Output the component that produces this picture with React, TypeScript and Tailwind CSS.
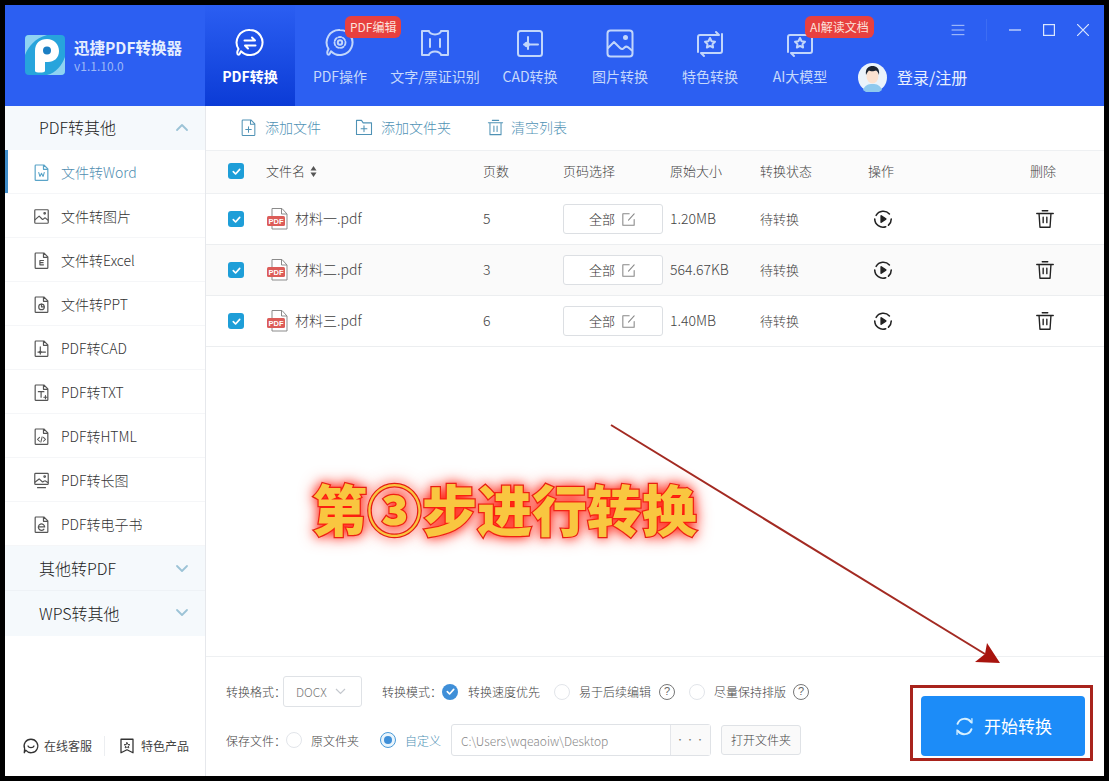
import React from "react";

const font = "font-['Noto_Sans_CJK_SC','Liberation_Sans',sans-serif]";

function Svg({ s = 20, c = "currentColor", w = 1.5, children }: { s?: number; c?: string; w?: number; children: React.ReactNode }) {
  return (
    <svg width={s} height={s} viewBox="0 0 24 24" fill="none" stroke={c} strokeWidth={w} strokeLinecap="round" strokeLinejoin="round" className="shrink-0">
      {children}
    </svg>
  );
}

const FILE = "M5 2.5h10l5 5V21a1 1 0 0 1-1 1H5a1 1 0 0 1-1-1V3.5a1 1 0 0 1 1-1zM14.5 2.5V8H20";

function NavIcon({ k }: { k: string }) {
  const c = "#c2d6fb";
  if (k === "conv")
    return (
      <svg width="32" height="32" viewBox="0 0 32 32" fill="none" stroke="#fff" strokeWidth="2" strokeLinecap="round" strokeLinejoin="round">
        <path d="M16 3a12.500 12.500 0 1 1-9 21.200c-1 1.500-1 3.500-2.500 3.500S2.700 25 4.500 22A12.500 12.500 0 0 1 16 3z" />
        <path d="M10.500 13.500H21l-3-3M21.500 18.500H11l3 3" />
      </svg>
    );
  if (k === "op")
    return (
      <svg width="32" height="32" viewBox="0 0 32 32" fill="none" stroke={c} strokeWidth="2" strokeLinecap="round" strokeLinejoin="round">
        <path d="M16 3a12.500 12.500 0 1 1-9 21.200c-1 1.500-1 3.500-2.500 3.500S2.700 25 4.500 22A12.500 12.500 0 0 1 16 3z" />
        <circle cx="16" cy="15.500" r="2.200" />
        <circle cx="16" cy="15.500" r="5.500" strokeDasharray="3 1.700" strokeWidth="1.800" />
      </svg>
    );
  if (k === "ocr")
    return (
      <svg width="32" height="32" viewBox="0 0 32 32" fill="none" stroke={c} strokeWidth="2" strokeLinecap="round" strokeLinejoin="round">
        <path d="M3 4h7a6 3.500 0 0 0 12 0h7v24h-7a6 3.500 0 0 0-12 0H3z" />
        <path d="M11 12v8M21 12v8" />
      </svg>
    );
  if (k === "cad")
    return (
      <svg width="30" height="30" viewBox="0 0 30 30" fill="none" stroke={c} strokeWidth="2" strokeLinecap="round" strokeLinejoin="round">
        <rect x="3" y="3" width="24" height="25" rx="2.500" />
        <path d="M13 9v12M9 16.500h14" />
        <circle cx="12" cy="16.500" r="1.800" fill={c} />
      </svg>
    );
  if (k === "img")
    return (
      <svg width="30" height="30" viewBox="0 0 30 30" fill="none" stroke={c} strokeWidth="2" strokeLinecap="round" strokeLinejoin="round">
        <rect x="2.500" y="2.500" width="25" height="26" rx="3" />
        <path d="M3 20l6-6 6 6c2 2 3 1 4.500-.5 1.500-1.500 3-1 4.500.5l3 2.500" />
        <circle cx="20.500" cy="9.500" r="1.500" fill={c} />
      </svg>
    );
  return (
    <svg width="30" height="30" viewBox="0 0 30 30" fill="none" stroke={c} strokeWidth="2" strokeLinecap="round" strokeLinejoin="round">
      <path d="M3 24V9a2 2 0 0 1 2-2h19l-3-3M27 6v17a2 2 0 0 1-2 2H6l3 3" />
      <path d="M15 10l1.600 3.200 3.400.5-2.500 2.400.6 3.400-3.100-1.600-3.100 1.600.6-3.400-2.500-2.400 3.400-.5z" />
    </svg>
  );
}

function Nav({ icon, label, w = "w-[90px]", active, badge }: { icon: string; label: string; w?: string; active?: boolean; badge?: string }) {
  return (
    <div className={`relative flex flex-col items-center pt-[22px] ${w} ${active ? "bg-gradient-to-b from-[#2b5ef2] to-[#0b3bd6]" : ""}`}>
      <div className="h-[32px] flex items-center justify-center"><NavIcon k={icon} /></div>
      <div className={`mt-[7px] text-[14px] leading-[20px] whitespace-nowrap ${active ? "text-white font-bold" : "text-[#c6d8fb] font-normal"}`}>{label}</div>
      {badge && (
        <div className="absolute left-[50px] top-[11px] h-[22px] px-[5px] rounded-[6px] bg-[#e8403f] text-[#fbe3dc] text-[12px] font-normal leading-[22px] whitespace-nowrap">{badge}</div>
      )}
    </div>
  );
}

function SideIcon({ k, c }: { k: string; c: string }) {
  return (
    <Svg s={19} c={c} w={1.5}>
      {k === "long" ? (
        <>
          <rect x="3.500" y="3" width="17" height="14" rx="1" />
          <path d="M4 14l5-4 4 3.500c1.500 1 2.500-2 4-1l3 2M7 21h10" />
          <circle cx="16" cy="7" r="1" />
        </>
      ) : k === "img" ? (
        <>
          <rect x="3.500" y="3.500" width="17" height="17" rx="1" />
          <path d="M4 16l5-4.500 4 4c1.500 1 2.500-2.500 4-1.500l3 2.500" />
          <circle cx="16" cy="8" r="1" />
        </>
      ) : (
        <>
          <path d={FILE} />
          {k === "w" && <path d="M8.500 12l1.500 5 2-4 2 4 1.500-5" strokeWidth="1.300" />}
          {k === "e" && <path d="M14.500 12H10v5.500h4.500M10 14.700h4" strokeWidth="1.500" />}
          {k === "p" && <><circle cx="12" cy="15" r="3.500" strokeWidth="1.500" /><path d="M12 11.500V15h3.500" strokeWidth="1.500" /></>}
          {k === "c" && <><path d="M10.500 10v9M7.500 16.500H17" /><circle cx="10.500" cy="16.500" r="1" /></>}
          {k === "t" && <path d="M8 11h7M11.500 11v7M15 18h4M17 16v4" />}
          {k === "h" && <path d="M9.500 13l-2.500 2.500 2.500 2.500M14.500 13l2.500 2.500-2.500 2.500M12.800 12.500l-1.600 6.500" strokeWidth="1.300" />}
          {k === "b" && <path d="M8 15h8a4 4 0 1 0-1 3" strokeWidth="1.500" />}
        </>
      )}
    </Svg>
  );
}

function Chevron({ up }: { up?: boolean }) {
  return (
    <svg width="14" height="9" viewBox="0 0 14 9" fill="none" stroke="#9cc3d6" strokeWidth="1.800" strokeLinecap="round" strokeLinejoin="round">
      <path d={up ? "M2 7l5-5 5 5" : "M2 2l5 5 5-5"} />
    </svg>
  );
}

function SideItem({ k, label, active }: { k: string; label: string; active?: boolean }) {
  return (
    <div className={`relative h-[44px] flex items-center pl-[27px] pt-[1px] border-b border-[#f5f6f8] ${active ? "text-[#4f8db0]" : "text-[#333]"}`}>
      {active && <div className="absolute left-0 top-0 bottom-0 w-[3px] bg-[#3f8cc9]" />}
      <SideIcon k={k} c={active ? "#5aa4c8" : "#555"} />
      <span className="ml-[10px] text-[14px] whitespace-nowrap">{label}</span>
    </div>
  );
}

function SideHead({ label, light }: { label: string; light?: boolean }) {
  return (
    <div className={`h-[45px] flex items-center justify-between pl-[34px] pr-[16px] text-[16px] text-[#222] bg-[#f5f9fc] ${light ? "border-b border-[#eef2f6]" : "pb-[2px]"}`}>
      <span>{label}</span>
      <Chevron />
    </div>
  );
}

function Check({ round }: { round?: boolean }) {
  return (
    <span className={`w-[16px] h-[16px] flex items-center justify-center shrink-0 ${round ? "rounded-full bg-[#3f8fd8]" : "rounded-[3px] bg-[#1e9ed8]"}`}>
      <svg width="11" height="11" viewBox="0 0 12 12" fill="none" stroke="#fff" strokeWidth="1.800" strokeLinecap="round" strokeLinejoin="round">
        <path d="M2.500 6.200l2.500 2.500 4.500-5" />
      </svg>
    </span>
  );
}

function PdfIcon() {
  return (
    <svg width="24" height="24" viewBox="0 0 24 24" fill="none" className="shrink-0">
      <path d="M6 1.500h10l5 5.500v15H6z" fill="#fff" stroke="#8b8b8b" strokeWidth="1" />
      <path d="M15.500 1.500V7H21" stroke="#8b8b8b" strokeWidth="1" />
      <rect x="1" y="9" width="18" height="10" rx="1.500" fill="#dc5c58" />
      <text x="10" y="17" textAnchor="middle" fontSize="7.500" fontWeight="700" fill="#fff" fontFamily="Liberation Sans">PDF</text>
    </svg>
  );
}

function Radio({ on }: { on?: boolean }) {
  return (
    <span className={`w-[16px] h-[16px] rounded-full border shrink-0 flex items-center justify-center ${on ? "border-[#4a9ad8] bg-[#eaf5fc]" : "border-[#e2e5ea] bg-white"}`}>
      {on && <span className="w-[8px] h-[8px] rounded-full bg-[#3f8fd8]" />}
    </span>
  );
}

function Help() {
  return (
    <span className="w-[16px] h-[16px] rounded-full border border-[#777] text-[#666] text-[11px] leading-none flex items-center justify-center shrink-0 font-['Liberation_Sans',sans-serif]">?</span>
  );
}

const rows = [
  { n: "材料一.pdf", p: "5", s: "1.20MB" },
  { n: "材料二.pdf", p: "3", s: "564.67KB" },
  { n: "材料三.pdf", p: "6", s: "1.40MB" },
];

const cols = "grid grid-cols-[60px_217px_80px_107px_90px_108px_162px_1fr] items-center";

function Tool({ label, icon, gap = "gap-[7px]" }: { label: string; icon: React.ReactNode; gap?: string }) {
  return (
    <div className={`flex items-center ${gap} text-[14px] text-[#4f92b5] pb-[2px]`}>
      {icon}
      <span>{label}</span>
    </div>
  );
}

export default function App() {
  return (
    <div className={`relative w-[1109px] h-[781px] bg-black pl-[5px] pr-[5px] pt-[5px] pb-[5px] overflow-hidden font-light ${font}`}>
      <div className="w-full h-full bg-white flex flex-col">
        {/* header */}
        <div className="h-[101px] bg-[#2c5ff2] flex shrink-0">
          <div className="w-[200px] flex items-center pl-[20px] pb-[2px]">
            <svg width="40" height="40" viewBox="0 0 40 40">
              <rect width="40" height="40" rx="4" fill="#27a4dc" />
              <path d="M0 4a4 4 0 0 1 4-4h18C10 3 3 12 0 20z" fill="#8fd3f2" />
              <path d="M40 36a4 4 0 0 1-4 4H22c9-2 15-10 18-18z" fill="#8fd3f2" />
              <path d="M10 36V16C10 8 15 4 22 4c7 0 12 5 12 12s-5 11-11 11h-3v9c0 2-10 2-10 0z" fill="#fff" />
              <circle cx="22" cy="15.500" r="4" fill="#1b7fc4" />
            </svg>
            <div className="ml-[9px]">
              <div className="text-[15.500px] leading-[22px] font-bold text-[#e6eefe] whitespace-nowrap">迅捷PDF转换器</div>
              <div className="text-[12px] leading-[16px] font-normal text-[#9db8f7]">v1.1.10.0</div>
            </div>
          </div>
          <Nav icon="conv" label="PDF转换" active />
          <Nav icon="op" label="PDF操作" badge="PDF编辑" />
          <Nav icon="ocr" label="文字/票证识别" w="w-[100px]" />
          <Nav icon="cad" label="CAD转换" />
          <Nav icon="img" label="图片转换" />
          <Nav icon="star" label="特色转换" />
          <Nav icon="star" label="AI大模型" badge="AI解读文档" />
          <div className="flex-1 flex flex-col">
            <div className="h-[50px] flex items-center justify-end pr-[15px] pb-[1px]">
              <Svg s={16} c="#c6d8fb" w={1.300}><path d="M3 5h18M3 12h18M3 19h18" /></Svg>
              <div className="w-px h-[22px] bg-[#3d6df3] ml-[20px] mr-[22px]" />
              <svg width="12" height="12" viewBox="0 0 12 12" stroke="#dce7fd" strokeWidth="1.200"><path d="M0 6h12" /></svg>
              <svg width="12" height="12" viewBox="0 0 12 12" fill="none" stroke="#dce7fd" strokeWidth="1.200" className="ml-[22px]"><rect x="0.600" y="0.600" width="10.800" height="10.800" /></svg>
              <svg width="12" height="12" viewBox="0 0 12 12" stroke="#dce7fd" strokeWidth="1.200" className="ml-[22px]"><path d="M0 0l12 12M12 0L0 12" /></svg>
            </div>
            <div className="flex items-center pl-[13px] mt-[8px]">
              <svg width="29" height="29" viewBox="0 0 29 29">
                <circle cx="14.500" cy="14.500" r="14.500" fill="#eaf3fb" />
                <path d="M5 27c2-5 5-6 9.500-6s7.500 1 9.500 6a14.500 14.500 0 0 1-19 0z" fill="#8ec9ee" />
                <ellipse cx="14.500" cy="13" rx="6" ry="7.500" fill="#fbe2d0" />
                <path d="M8 12c-1-7 3-9 6.500-9S22 5 21 12c-1-3-2-4-3-4.500-2 1-6 1-7 0-1 1-2 2-3 4.500z" fill="#1b2430" />
              </svg>
              <span className="ml-[10px] pb-[2px] text-[16px] text-[#e8effe] font-normal whitespace-nowrap">登录/注册</span>
            </div>
          </div>
        </div>

        <div className="flex-1 flex min-h-0">
          {/* sidebar */}
          <div className="w-[201px] shrink-0 border-r border-[#e6e8ec] flex flex-col">
            <div className="h-[44px] flex items-center justify-between pl-[34px] pr-[16px] pb-[2px] text-[16px] text-[#222] bg-[#f5f9fc]">
              <span>PDF转其他</span>
              <Chevron up />
            </div>
            <SideItem k="w" label="文件转Word" active />
            <SideItem k="img" label="文件转图片" />
            <SideItem k="e" label="文件转Excel" />
            <SideItem k="p" label="文件转PPT" />
            <SideItem k="c" label="PDF转CAD" />
            <SideItem k="t" label="PDF转TXT" />
            <SideItem k="h" label="PDF转HTML" />
            <SideItem k="long" label="PDF转长图" />
            <SideItem k="b" label="PDF转电子书" />
            <SideHead label="其他转PDF" light />
            <SideHead label="WPS转其他" />
            <div className="mt-auto h-[60px] flex items-center pl-[17px] text-[12px] text-[#444] font-normal">
              <Svg s={18} c="#333" w={1.700}>
                <path d="M12 3a9 9 0 1 1-7 14.600L3 21l.5-5.500A9 9 0 0 1 12 3z" />
                <path d="M8 12c1 3 7 3 8 0" />
              </Svg>
              <span className="ml-[4px] whitespace-nowrap">在线客服</span>
              <div className="w-px h-[20px] bg-[#eceef1] ml-[12px]" />
              <span className="ml-[13px]">
                <Svg s={18} c="#333" w={1.700}>
                  <path d="M4 3h16v18l-8-4-8 4z" />
                  <path d="M12 7.500l1.200 2.400 2.600.3-1.900 1.800.5 2.600-2.400-1.300-2.400 1.300.5-2.600-1.900-1.800 2.600-.3z" strokeWidth="1.200" />
                </Svg>
              </span>
              <span className="ml-[5px] whitespace-nowrap">特色产品</span>
            </div>
          </div>

          {/* main */}
          <div className="flex-1 flex flex-col min-w-0">
            <div className="h-[44px] flex items-center pl-[33px] shrink-0">
              <Tool label="添加文件" icon={<Svg s={19} c="#4f92b5" w={1.300}><path d={FILE} /><path d="M12 11v7M8.500 14.500h7" /></Svg>} />
              <span className="ml-[33px]" />
              <Tool label="添加文件夹" icon={<Svg s={20} c="#4f92b5" w={1.300}><path d="M3 4h6l2 3h10v14H3z" /><path d="M12 10.500v7M8.500 14h7" /></Svg>} />
              <span className="ml-[35px]" />
              <Tool label="清空列表" gap="gap-[6px]" icon={<Svg s={19} c="#4f92b5" w={1.300}><path d="M3 6h18M8 3h8M5 6v15h14V6M10 10v7M14 10v7" /></Svg>} />
            </div>
            <div className={`${cols} h-[44px] pb-[2px] bg-[#fbfbfb] border-y border-[#eef0f2] text-[13px] text-[#444] shrink-0`}>
              <div className="pl-[22px]"><Check /></div>
              <div className="flex items-center gap-[5px]">
                文件名
                <svg width="7" height="11" viewBox="0 0 7 11" fill="#555"><path d="M3.500 0l3 4.500H.5zM3.500 11l3-4.500H.5z" /></svg>
              </div>
              <div>页数</div>
              <div>页码选择</div>
              <div>原始大小</div>
              <div>转换状态</div>
              <div>操作</div>
              <div>删除</div>
            </div>
            {rows.map((r, i) => (
              <div key={r.n} className={`${cols} h-[51px] border-b border-[#eceef0] text-[13px] text-[#444] shrink-0 ${i === 1 ? "bg-[#fafafa]" : "bg-white"}`}>
                <div className="pl-[22px]"><Check /></div>
                <div className="flex items-center gap-[5px]">
                  <PdfIcon />
                  <span className="pb-[2px] text-[14px] text-[#3f3f3f]">{r.n}</span>
                </div>
                <div className="pb-[2px] text-[14px]">{r.p}</div>
                <div>
                  <div className="w-[100px] h-[30px] border border-[#dcdfe3] rounded-[3px] bg-white flex items-center justify-center gap-[5px] text-[#333]">
                    <span className="pb-[1px]">全部</span>
                    <Svg s={17} c="#888" w={1.500}><path d="M20 12v8H4V4h9M12 13l8-9" /></Svg>
                  </div>
                </div>
                <div className="pb-[2px] text-[14px]">{r.s}</div>
                <div className="pb-[1px]">待转换</div>
                <div className="pl-[4px]">
                  <Svg s={22} c="#222" w={1.700}>
                    <path d="M4.500 8A9 9 0 0 1 19 6.500M21 12a9 9 0 0 1-3 6.700M15 20.400A9 9 0 0 1 3 12" />
                    <path d="M10 8.500l5 3.500-5 3.500z" fill="#222" />
                  </Svg>
                </div>
                <div className="pl-[4px]">
                  <Svg s={22} c="#222" w={1.500}>
                    <path d="M3 6h18M9 3h6M5.500 6l1 15h11l1-15M10 10v6M14 10v6" />
                  </Svg>
                </div>
              </div>
            ))}

            {/* bottom */}
            <div className="mt-auto h-[120px] border-t border-[#eef0f2] shrink-0 flex text-[12px] text-[#444]">
              <div className="flex-1 flex flex-col pl-[20px] pt-[20px]">
                <div className="flex items-center h-[31px] -mt-[1px]">
                  <span className="w-[57px] whitespace-nowrap">转换格式：</span>
                  <div className="w-[79px] h-[31px] border border-[#dfe2e6] rounded-[3px] flex items-center pl-[12px] gap-[8px] text-[#777]">
                    DOCX
                    <svg width="11" height="7" viewBox="0 0 11 7" fill="none" stroke="#c4c8ce" strokeWidth="1.200"><path d="M1 1l4.500 4.500L10 1" /></svg>
                  </div>
                  <span className="ml-[20px] w-[60px] whitespace-nowrap">转换模式：</span>
                  <Check round />
                  <span className="ml-[10px] whitespace-nowrap">转换速度优先</span>
                  <span className="ml-[14px]"><Radio /></span>
                  <span className="ml-[9px] whitespace-nowrap">易于后续编辑</span>
                  <span className="ml-[8px]"><Help /></span>
                  <span className="ml-[14px]"><Radio /></span>
                  <span className="ml-[9px] whitespace-nowrap">尽量保持排版</span>
                  <span className="ml-[7px]"><Help /></span>
                </div>
                <div className="flex items-center h-[32px] mt-[17px]">
                  <span className="w-[60px] whitespace-nowrap pt-[1px]">保存文件：</span>
                  <Radio />
                  <span className="ml-[9px] whitespace-nowrap pt-[1px]">原文件夹</span>
                  <span className="ml-[21px]"><Radio on /></span>
                  <span className="ml-[9px] text-[#4f92b5] whitespace-nowrap pt-[1px]">自定义</span>
                  <div className="ml-[10px] w-[260px] h-[32px] border border-[#dfe2e6] rounded-[3px] flex">
                    <div className="flex-1 flex items-center pl-[9px] pt-[1px] text-[#888] whitespace-nowrap">C:\Users\wqeaoiw\Desktop</div>
                    <div className="w-[40px] border-l border-[#e4e6ea] bg-[#fafafa] flex items-center justify-center text-[#777] text-[9px] tracking-[1px]">•••</div>
                  </div>
                  <div className="ml-[10px] w-[80px] h-[30px] border border-[#dfe2e6] rounded-[3px] bg-[#fafafa] flex items-center justify-center whitespace-nowrap">打开文件夹</div>
                </div>
              </div>
              <div className="w-[184px] shrink-0 pl-[1px] pt-[39px]">
                <div className="w-[164px] h-[60px] rounded-[4px] bg-[#1c8cf8] text-white font-normal flex items-center justify-center gap-[9px] text-[17px]">
                  <svg width="21" height="21" viewBox="0 0 24 24" fill="none" stroke="#d6f0ff" strokeWidth="2.200" strokeLinecap="round">
                    <path d="M4 9a8.800 8.800 0 0 1 15.500-2M20 15a8.800 8.800 0 0 1-15.500 2" />
                    <path d="M20.500 3v5M3.500 21v-5" strokeWidth="1.500" />
                  </svg>
                  开始转换
                </div>
              </div>
            </div>
          </div>
        </div>
      </div>

      {/* annotations */}
      <div className="absolute left-[910px] top-[685px] w-[183px] h-[76px] border-[3px] border-[#a8231c] pointer-events-none" />
      <svg className="absolute left-0 top-0 pointer-events-none" width="1109" height="781" viewBox="0 0 1109 781" fill="none">
        <path d="M611 425L985 654" stroke="#a32a22" strokeWidth="2" />
        <path d="M1000 663L987 643l-2 11-10 8z" fill="#a8140e" />
      </svg>
      <div className="absolute left-[312px] top-[472px] whitespace-nowrap text-[55px] leading-[70px] font-black text-[#f9c640] [-webkit-text-stroke:2.500px_#d91f12] [paint-order:stroke_fill] [text-shadow:0_0_11px_#ff1a0a,0_0_17px_#ff3a2a]">
        第③步进行转换
      </div>
    </div>
  );
}
